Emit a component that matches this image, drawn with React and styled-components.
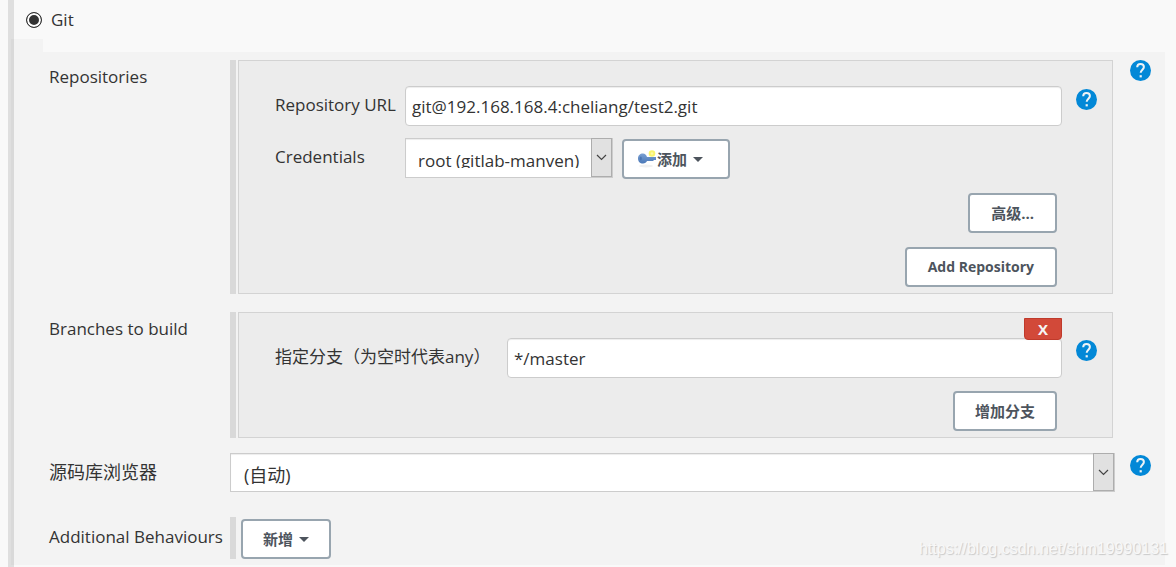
import React from "react";
import styled, { createGlobalStyle } from "styled-components";

const GlobalStyle = createGlobalStyle`
  *, *::before, *::after { box-sizing: border-box; }
  body {
    margin: 0;
    background: #f9f9f9;
    color: #333;
    font-family: "Open Sans", "Noto Sans CJK SC", sans-serif;
    font-size: 17px;
    line-height: 24px;
  }
`;

const Page = styled.main`
  position: relative;
  min-height: 100vh;
  padding-left: 8px;
`;

const ScmSection = styled.section`
  min-height: 100vh;
  border-left: 6px solid #dfdfdf;
`;

const ScmChoice = styled.label`
  display: flex;
  align-items: center;
  gap: 9px;
  height: 39px;
  padding-left: 12px;
`;

const Radio = styled.input`
  appearance: none;
  width: 16px;
  height: 16px;
  margin: 0;
  border: 1px solid #333;
  border-radius: 50%;
  background: #fff;

  &:checked {
    background: #333;
    box-shadow: inset 0 0 0 2px #fff;
  }
`;

const Shade = styled.div`
  background: rgba(0, 0, 0, 0.024);
`;

const Notch = styled(Shade)`
  width: 32px;
  height: 13px;
  margin-left: -3px;
`;

const Panel = styled(Shade)`
  display: flex;
  flex-direction: column;
  margin: 0 11px 0 -3px;
  padding: 8px 0 6px 38px;
`;

const FormRow = styled.div`
  display: grid;
  grid-template-columns: 181px minmax(0, 1fr) 50px;
  align-items: start;
  margin-bottom: ${(p) => p.$gap || 0}px;
`;

const RowLabel = styled.label`
  font-size: ${(p) => (p.$cjk ? 18 : 17)}px;
  padding-top: ${(p) => p.$top || 5}px;
  white-space: nowrap;
`;

const Repeatable = styled.div`
  border-left: 6px solid #d9d9d9;
  padding: ${(p) => (p.$bare ? "2px 0 0 5px" : "0 2px")};
`;

const Chunk = styled.div`
  position: relative;
  display: flex;
  flex-direction: column;
  gap: ${(p) => p.$gap}px;
  padding: 25px 0 6px 36px;
  border: 1px solid #d3d3d3;
  background: #ececec;
`;

const Field = styled.div`
  display: grid;
  grid-template-columns: ${(p) => p.$label}px minmax(0, 1fr) 50px;
  align-items: start;
`;

const FieldLabel = styled.label`
  padding-top: ${(p) => p.$top || 7}px;
  white-space: nowrap;
`;

const TextInput = styled.input`
  width: 100%;
  height: 40px;
  padding: 0 6px;
  border: 1px solid #ccc;
  border-radius: 4px;
  background: #fff;
  box-shadow: inset 0 1px 1px rgba(0, 0, 0, 0.075);
  color: #333;
  font: inherit;
`;

const Controls = styled.div`
  display: flex;
  align-items: flex-end;
  gap: 9px;
  height: 53px;
  padding-top: 12px;
`;

const SelectFrame = styled.div`
  position: relative;
  align-self: flex-start;
  width: ${(p) => (p.$width ? `${p.$width}px` : "100%")};
`;

const SelectBox = styled.select`
  appearance: none;
  display: block;
  width: 100%;
  height: ${(p) => p.$height}px;
  padding: ${(p) => (p.$cjk ? "4px 22px 0 13px" : "10px 22px 9px 12px")};
  border: 1px solid #ccc;
  border-radius: 0;
  background: #fff;
  box-shadow: inset 0 1px 1px rgba(0, 0, 0, 0.075);
  color: #333;
  font: inherit;
  font-size: ${(p) => (p.$cjk ? 18 : 17)}px;
`;

const SelectArrow = styled.span`
  position: absolute;
  inset: 0 1px 1px auto;
  display: flex;
  align-items: center;
  justify-content: center;
  width: 21px;
  border: 1px solid #adadad;
  background: #e1e1e1;
  pointer-events: none;
`;

const Button = styled.button`
  display: inline-flex;
  align-items: center;
  justify-content: center;
  height: 40px;
  padding: ${(p) => p.$pad || "0 20px"};
  border: 2px solid #98a5af;
  border-radius: 4px;
  background: #fff;
  color: #4d545d;
  font: inherit;
  font-size: ${(p) => (p.$latin ? 14 : 15)}px;
  font-weight: 700;
  white-space: nowrap;
`;

const Actions = styled.div`
  display: flex;
  justify-content: flex-end;
  padding-right: 55px;
`;

const DeleteButton = styled.button`
  position: absolute;
  top: 5px;
  right: 50px;
  width: 38px;
  height: 22px;
  padding: 0;
  border: 1px solid #bf3a2b;
  border-radius: 0 0 4px 4px;
  background: #d24939;
  color: #f5f5f5;
  font: inherit;
  font-size: 15px;
  font-weight: 700;
  line-height: 20px;
`;

const HelpButton = styled.button`
  display: block;
  width: 21px;
  height: 21px;
  margin: ${(p) => p.$top || 0}px 0 0 ${(p) => p.$left || 15}px;
  padding: 0;
  border: 0;
  background: none;
`;

const Caret = styled.span`
  margin-left: 6px;
  border: 5px solid transparent;
  border-top-color: currentColor;
  border-bottom: 0;
`;

const Watermark = styled.div`
  position: absolute;
  right: 8px;
  bottom: 6px;
  color: #f8f8f8;
  font: 16px/24px "Liberation Sans", sans-serif;
  text-shadow: 1px 1px 1px #c8c8c8;
`;

function Help({ top, left, label }) {
  return (
    <HelpButton type="button" $top={top} $left={left} aria-label={`Help: ${label}`}>
      <svg width="21" height="21" viewBox="0 0 21 21" display="block" aria-hidden="true">
        <circle cx="10.500" cy="10.500" r="10.500" fill="#0288d7" />
        <path
          d="M7.200 7.300C7.200 5.200 8.600 4 10.500 4s3.400 1.200 3.400 3c0 2.500-3.200 2.900-3.200 5.800"
          fill="none"
          stroke="#eef3f6"
          strokeWidth="2"
        />
        <rect x="9.600" y="15.200" width="2.200" height="2.200" fill="#eef3f6" />
      </svg>
    </HelpButton>
  );
}

function Select({ id, width, height, cjk, children }) {
  return (
    <SelectFrame $width={width}>
      <SelectBox id={id} $height={height} $cjk={cjk}>
        <option>{children}</option>
      </SelectBox>
      <SelectArrow>
        <svg width="11" height="7" viewBox="0 0 11 7" aria-hidden="true">
          <path d="M1 1l4.500 4.500L10 1" fill="none" stroke="#444" strokeWidth="1.200" />
        </svg>
      </SelectArrow>
    </SelectFrame>
  );
}

function KeyIcon() {
  return (
    <svg width="20" height="18" viewBox="0 0 20 18" aria-hidden="true">
      <defs>
        <linearGradient id="keyBlue" x1="0" y1="0" x2="0" y2="1">
          <stop offset="0" stopColor="#7ba0d2" />
          <stop offset="1" stopColor="#4a78b8" />
        </linearGradient>
      </defs>
      <ellipse cx="9" cy="16" rx="7" ry="1.500" fill="#f0f0f0" />
      <path
        fill="url(#keyBlue)"
        d="M6 3.500C3 3.500 1 5.500 1 8.500s2 5 5 5c2 0 3.300-1 4-2.500h6l1-1h2V7h-9C9.300 4.800 8 3.500 6 3.500z"
      />
      <ellipse cx="3.800" cy="8.500" rx="1" ry="2" fill="#4a75b2" />
      <circle cx="15" cy="3.500" r="3.300" fill="#fbf56e" />
      <circle cx="15" cy="3.500" r="1.200" fill="#fff9a8" />
    </svg>
  );
}

export default function App() {
  return (
    <Page>
      <GlobalStyle />
      <ScmSection>
        <ScmChoice>
          <Radio type="radio" name="scm" defaultChecked />
          Git
        </ScmChoice>
        <Notch />
        <Panel>
          <FormRow $gap={18}>
            <RowLabel as="div">Repositories</RowLabel>
            <Repeatable>
              <Chunk $gap={14}>
                <div>
                  <Field $label={130}>
                    <FieldLabel htmlFor="url">Repository URL</FieldLabel>
                    <TextInput id="url" defaultValue="git@192.168.168.4:cheliang/test2.git" />
                    <Help top={3} left={14} label="Repository URL" />
                  </Field>
                  <Field $label={130}>
                    <FieldLabel htmlFor="credentials" $top={19}>
                      Credentials
                    </FieldLabel>
                    <Controls>
                      <Select id="credentials" width={208} height={40}>
                        root (gitlab-manven)
                      </Select>
                      <Button type="button" $pad="0 25px 0 13px">
                        <KeyIcon />
                        添加
                        <Caret />
                      </Button>
                    </Controls>
                  </Field>
                </div>
                <Actions>
                  <Button type="button" $pad="0 21px">
                    高级...
                  </Button>
                </Actions>
                <Actions>
                  <Button type="button" $latin $pad="0 21px">
                    Add Repository
                  </Button>
                </Actions>
              </Chunk>
            </Repeatable>
            <Help label="Repositories" />
          </FormRow>

          <FormRow $gap={15}>
            <RowLabel as="div">Branches to build</RowLabel>
            <Repeatable>
              <Chunk $gap={13}>
                <Field $label={232}>
                  <FieldLabel htmlFor="branch">指定分支（为空时代表any）</FieldLabel>
                  <TextInput id="branch" defaultValue="*/master" />
                  <Help top={2} left={14} label="指定分支" />
                </Field>
                <Actions>
                  <Button type="button">增加分支</Button>
                </Actions>
                <DeleteButton type="button">X</DeleteButton>
              </Chunk>
            </Repeatable>
          </FormRow>

          <FormRow $gap={25}>
            <RowLabel htmlFor="browser" $cjk $top={7}>
              源码库浏览器
            </RowLabel>
            <Select id="browser" height={39} cjk>
              (自动)
            </Select>
            <Help top={2} label="源码库浏览器" />
          </FormRow>

          <FormRow>
            <RowLabel as="div" $top={8}>
              Additional Behaviours
            </RowLabel>
            <Repeatable $bare>
              <Button type="button">
                新增
                <Caret />
              </Button>
            </Repeatable>
          </FormRow>
        </Panel>
      </ScmSection>
      <Watermark>https://blog.csdn.net/shm19990131</Watermark>
    </Page>
  );
}
